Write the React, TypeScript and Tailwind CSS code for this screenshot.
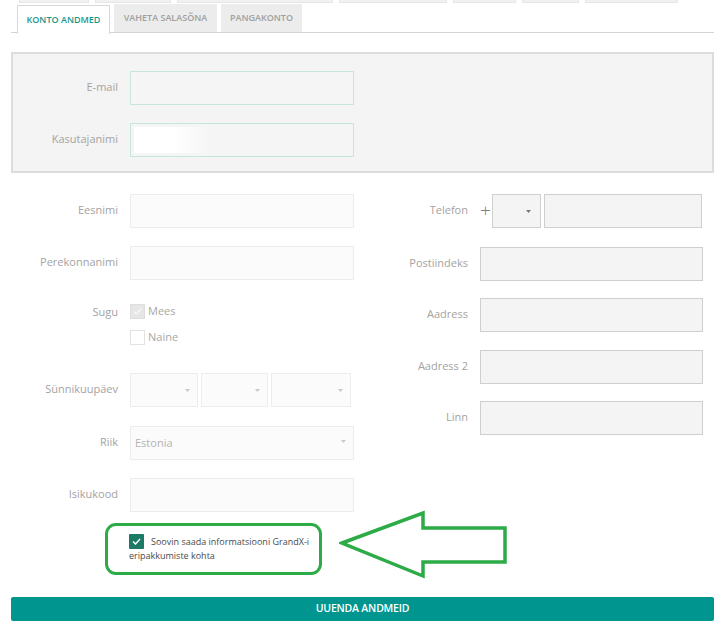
import React from "react";

const font = { fontFamily: '"Open Sans", "Noto Sans", sans-serif' };

function Caret({ className = "" }: { className?: string }) {
  return (
    <svg width="5" height="3" viewBox="0 0 5 3" className={className}>
      <path d="M0 0 L5 0 L2.5 3 Z" fill="currentColor" />
    </svg>
  );
}

function Label({ children, w, pt = "pt-[8px]" }: { children: React.ReactNode; w: string; pt?: string }) {
  return (
    <div className={`${w} shrink-0 text-right text-[11px] leading-[16px] text-[#a3a3a3] ${pt}`}>{children}</div>
  );
}

export default function App() {
  const topBars = [70, 76, 156, 108, 63, 57, 93];

  return (
    <div className="w-[725px] h-[638px] bg-white overflow-hidden" style={font}>
      {/* cut-off menu strip */}
      <div className="flex gap-[6px] pl-[19px] h-[3px]">
        {topBars.map((w, i) => (
          <div key={i} className="h-[3px] bg-[#f1f1f1] border-b border-x border-[#e6e6e6]" style={{ width: w }} />
        ))}
      </div>

      {/* Tabs */}
      <div className="mx-[11px] mt-[1px] flex gap-[4px] pl-[6px] border-b border-[#d4d4d4] h-[29px]">
        <div className="w-[93px] h-[29px] bg-white border border-b-0 border-[#d8d8d8] flex items-center justify-center text-[9px] font-semibold text-[#17968e] relative top-[1px]">
          KONTO ANDMED
        </div>
        <div className="w-[103px] h-[28px] bg-[#ececec] flex items-center justify-center text-[9px] font-semibold text-[#a0a0a0]">
          VAHETA SALASÕNA
        </div>
        <div className="w-[81px] h-[28px] bg-[#ececec] flex items-center justify-center text-[9px] font-semibold text-[#a0a0a0]">
          PANGAKONTO
        </div>
      </div>

      {/* Account box */}
      <div className="mx-[11px] mt-[19px] h-[121px] bg-[#f4f4f4] border-2 border-[#dcdcdc] pt-[17px]">
        <div className="flex">
          <Label w="w-[105px]">E-mail</Label>
          <div className="ml-[12px] w-[224px] h-[34px] border border-[#c6e6dc] bg-[#f5f5f5]" />
        </div>
        <div className="flex mt-[18px]">
          <Label w="w-[105px]">Kasutajanimi</Label>
          <div className="ml-[12px] w-[224px] h-[34px] border border-[#c6e6dc] bg-[#f5f5f5] p-[3px]">
            <div className="w-[76px] h-[26px] bg-gradient-to-r from-white via-white to-[#f5f5f5]" />
          </div>
        </div>
      </div>

      {/* Form columns */}
      <div className="mx-[11px] mt-[21px] flex">
        {/* left */}
        <div className="w-[349px]">
          <div className="flex">
            <Label w="w-[107px]">Eesnimi</Label>
            <div className="ml-[12px] w-[224px] h-[34px] border border-[#ececec] bg-[#fbfbfb]" />
          </div>
          <div className="flex mt-[18px]">
            <Label w="w-[107px]">Perekonnanimi</Label>
            <div className="ml-[12px] w-[224px] h-[34px] border border-[#ececec] bg-[#fbfbfb]" />
          </div>
          <div className="flex mt-[24px]">
            <Label w="w-[107px]" pt="pt-0">Sugu</Label>
            <div className="ml-[12px] flex flex-col gap-[11px]">
              <div className="flex items-center gap-[3px]">
                <div className="w-[15px] h-[15px] bg-[#e6e6e6] border border-[#dedede] flex items-center justify-center">
                  <svg width="9" height="7" viewBox="0 0 9 7">
                    <path d="M1 3.5 L3.5 6 L8 1" stroke="#f7f7f7" strokeWidth="1.4" fill="none" />
                  </svg>
                </div>
                <span className="text-[11px] leading-[16px] text-[#a8a8a8] -mt-[2px]">Mees</span>
              </div>
              <div className="flex items-center gap-[3px]">
                <div className="w-[15px] h-[15px] bg-white border border-[#e2e2e2]" />
                <span className="text-[11px] leading-[16px] text-[#a8a8a8] -mt-[2px]">Naine</span>
              </div>
            </div>
          </div>
          <div className="flex mt-[28px]">
            <Label w="w-[107px]">Sünnikuupäev</Label>
            <div className="ml-[12px] flex gap-[3px]">
              {[68, 67, 80].map((w, i) => (
                <div
                  key={i}
                  className="h-[34px] border border-[#ececec] bg-[#fbfbfb] flex items-center justify-end pr-[7px] text-[#c8c8c8]"
                  style={{ width: w }}
                >
                  <Caret />
                </div>
              ))}
            </div>
          </div>
          <div className="flex mt-[19px]">
            <Label w="w-[107px]">Riik</Label>
            <div className="ml-[12px] w-[224px] h-[34px] border border-[#ececec] bg-[#fbfbfb] flex items-center justify-between pl-[4px] pr-[7px]">
              <span className="text-[11px] text-[#b3b3b3]">Estonia</span>
              <Caret className="text-[#c8c8c8] -mt-[4px]" />
            </div>
          </div>
          <div className="flex mt-[18px]">
            <Label w="w-[107px]">Isikukood</Label>
            <div className="ml-[12px] w-[224px] h-[34px] border border-[#ececec] bg-[#fbfbfb]" />
          </div>
        </div>

        {/* right */}
        <div className="flex-1">
          <div className="flex">
            <Label w="w-[108px]">Telefon</Label>
            <span className="ml-[11px] w-[13px] text-[19px] font-light leading-[32px] text-[#7d7d7d] text-center">+</span>
            <div className="w-[49px] h-[34px] border border-[#cfcfcf] bg-[#f4f4f4] flex items-center justify-end pr-[9px] text-[#777]">
              <Caret />
            </div>
            <div className="ml-[3px] w-[158px] h-[34px] border border-[#cfcfcf] bg-[#f4f4f4]" />
          </div>
          {["Postiindeks", "Aadress", "Aadress 2", "Linn"].map((l, i) => (
            <div key={l} className={`flex ${i === 0 ? "mt-[19px]" : i === 2 ? "mt-[18px]" : "mt-[17px]"}`}>
              <Label w="w-[108px]">{l}</Label>
              <div className="ml-[12px] w-[223px] h-[34px] border border-[#cfcfcf] bg-[#f4f4f4]" />
            </div>
          ))}
        </div>
      </div>

      {/* Newsletter checkbox with highlight */}
      <div className="mx-[11px] flex items-start h-[66px]">
        <div className="ml-[94px] mt-[11px] w-[217px] h-[52px] border-[3px] border-[#2dab47] rounded-[11px] pl-[21px] pr-[8px] pt-[9px]">
          <p className="text-[9px] leading-[14px] text-[#4a4a4a]">
            <span className="inline-flex align-middle w-[15px] h-[15px] bg-[#1d7a64] rounded-[1px] items-center justify-center mr-[7px] -mt-[2px]">
              <svg width="9" height="7" viewBox="0 0 9 7">
                <path d="M1 3.5 L3.5 6 L8 1" stroke="#ffffff" strokeWidth="1.5" fill="none" />
              </svg>
            </span>
            Soovin saada informatsiooni GrandX-i eripakkumiste kohta
          </p>
        </div>
        <svg width="170" height="70" viewBox="0 0 170 70" className="ml-[17px] -mt-[2px]">
          <path
            d="M3 33 L84 3 L84 18 L166 18 L166 52 L84 52 L84 66 Z"
            fill="none"
            stroke="#2dab47"
            strokeWidth="3.5"
            strokeLinejoin="miter"
          />
        </svg>
      </div>

      {/* Submit */}
      <div className="mx-[11px] mt-[16px]">
        <button className="w-full h-[24px] bg-[#00968f] rounded-[2px] text-white text-[10.5px] font-semibold tracking-[-0.2px]">
          UUENDA ANDMEID
        </button>
      </div>
    </div>
  );
}
